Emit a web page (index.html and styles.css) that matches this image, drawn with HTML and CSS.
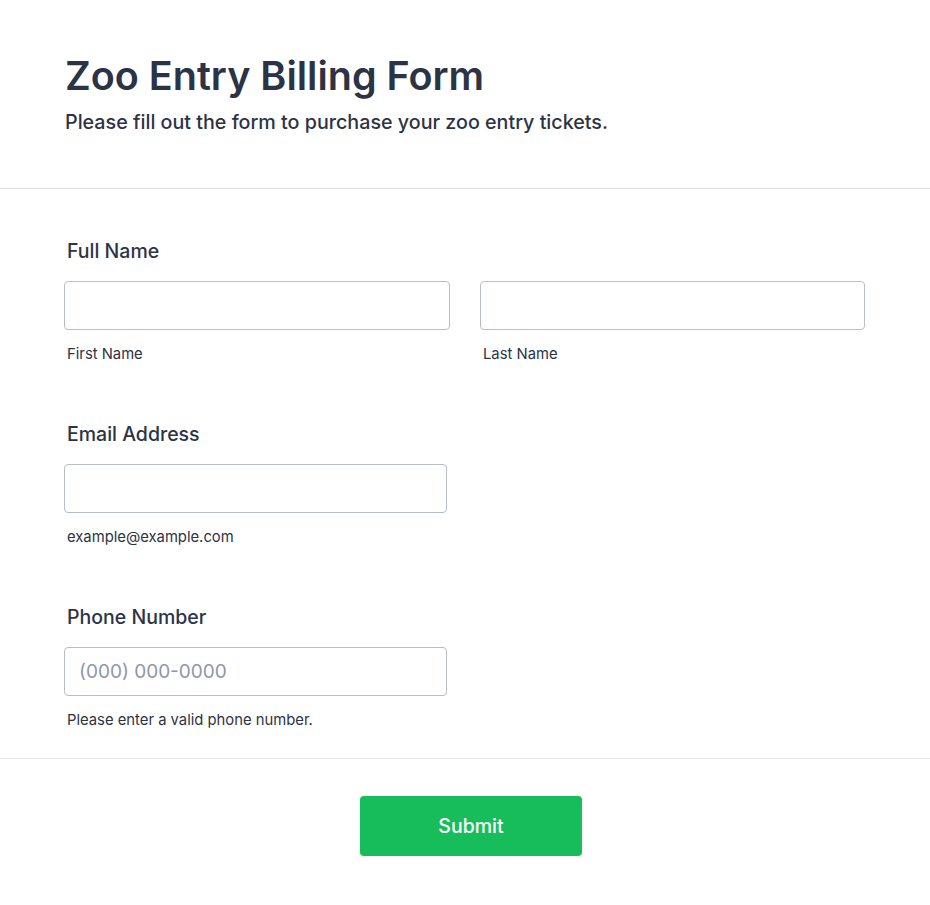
FILE: index.html
```html
<!DOCTYPE html>
<html lang="en">
<head>
<meta charset="utf-8">
<title>Zoo Entry Billing Form</title>
<link rel="stylesheet" href="styles.css">
</head>
<body>
<form class="form">
  <header class="form-header">
    <h1 class="form-title">Zoo Entry Billing Form</h1>
    <p class="form-subtitle">Please fill out the form to purchase your zoo entry tickets.</p>
  </header>
  <section class="form-body">
    <div class="field">
      <label class="field-label">Full Name</label>
      <div class="name-row">
        <div class="sub-field">
          <input class="text-input" type="text">
          <span class="sub-label">First Name</span>
        </div>
        <div class="sub-field">
          <input class="text-input" type="text">
          <span class="sub-label">Last Name</span>
        </div>
      </div>
    </div>
    <div class="field">
      <label class="field-label">Email Address</label>
      <div class="sub-field half">
        <input class="text-input" type="email">
        <span class="sub-label">example@example.com</span>
      </div>
    </div>
    <div class="field">
      <label class="field-label">Phone Number</label>
      <div class="sub-field half">
        <input class="text-input" type="tel" placeholder="(000) 000-0000">
        <span class="sub-label">Please enter a valid phone number.</span>
      </div>
    </div>
  </section>
  <footer class="form-footer">
    <button class="submit-btn" type="button">Submit</button>
  </footer>
</form>
</body>
</html>
```

FILE: styles.css
```css
* { box-sizing: border-box; }
html, body { margin: 0; padding: 0; background: #ffffff; }
body {
  font-family: Inter, "Noto Sans", "Liberation Sans", sans-serif;
  color: #2c3345;
}
.form { width: 930px; }
.form-header {
  padding: 51px 64px 52px 65px;
  border-bottom: 1px solid #d8dae9;
}
.form-title {
  margin: 0;
  font-size: 39.5px;
  line-height: 50px;
  font-weight: 600;
  color: #2c3345;
}
.form-subtitle {
  margin: 8px 0 0;
  font-size: 19.7px;
  line-height: 27px;
  font-weight: 500;
  color: #2c3345;
}
.form-body {
  padding: 50px 65px 28px 64px;
  display: flex;
  flex-direction: column;
  gap: 58px;
  border-bottom: 1px solid #e6e8f1;
}
.field { display: flex; flex-direction: column; }
.field-label {
  font-size: 19.5px;
  line-height: 24px;
  font-weight: 500;
  padding-left: 3px;
  margin-bottom: 18px;
  color: #2c3345;
}
.name-row {
  display: grid;
  grid-template-columns: 386px 385px;
  column-gap: 30px;
}
.sub-field { display: flex; flex-direction: column; }
.sub-field.half { width: 383px; }
.text-input {
  height: 49px;
  width: 100%;
  border: 1px solid #b8bdcc;
  border-radius: 4px;
  padding: 0 14px;
  font-family: inherit;
  font-size: 19px;
  color: #2c3345;
  background: #fff;
  outline: none;
}
.text-input::placeholder { color: #8f96ad; }
.sub-label {
  margin-top: 14px;
  padding-left: 3px;
  font-size: 14.8px;
  line-height: 20px;
  color: #2c3345;
}
.form-footer {
  display: flex;
  justify-content: center;
  padding: 37px 0 49px 12px;
}
.submit-btn {
  width: 222px;
  height: 60px;
  background: #18bd5b;
  border: none;
  border-radius: 4px;
  color: #fff;
  font-family: inherit;
  font-size: 19.5px;
  font-weight: 500;
  cursor: pointer;
}
```
